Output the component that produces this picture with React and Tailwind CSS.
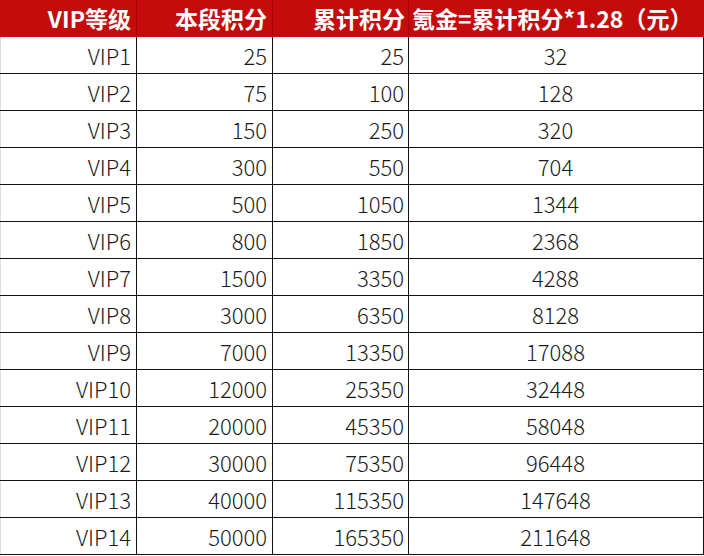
const rows = [
  ['VIP1', 25, 25, 32],
  ['VIP2', 75, 100, 128],
  ['VIP3', 150, 250, 320],
  ['VIP4', 300, 550, 704],
  ['VIP5', 500, 1050, 1344],
  ['VIP6', 800, 1850, 2368],
  ['VIP7', 1500, 3350, 4288],
  ['VIP8', 3000, 6350, 8128],
  ['VIP9', 7000, 13350, 17088],
  ['VIP10', 12000, 25350, 32448],
  ['VIP11', 20000, 45350, 58048],
  ['VIP12', 30000, 75350, 96448],
  ['VIP13', 40000, 115350, 147648],
  ['VIP14', 50000, 165350, 211648],
]

export default function App() {
  return (
    <div
      className="w-[704px] h-[556px] bg-white"
      style={{ fontFamily: '"Noto Sans CJK SC", "Noto Sans", sans-serif' }}
    >
      {/* Header */}
      <div className="grid grid-cols-[137px_136px_136px_295px] h-[37px] bg-[#c50c0c] text-white font-bold text-[23px] leading-none">
        <div className="flex items-center justify-end pr-[5px] border-r border-[#a80000]">VIP等级</div>
        <div className="flex items-center justify-end pr-[5px] border-r border-[#a80000]">本段积分</div>
        <div className="flex items-center justify-end pr-[3px] border-r border-[#a80000]">累计积分</div>
        <div className="flex items-center pl-[3px] whitespace-nowrap">氪金=累计积分*1.28（元）</div>
      </div>

      {/* Rows */}
      {rows.map(([lv, seg, total, money]) => (
        <div
          key={lv}
          className="grid grid-cols-[137px_136px_136px_295px] h-[37px] border-b border-[#111] text-[22px] font-light leading-none text-[#1a1a1a]"
        >
          <div className="flex items-center justify-end pr-[5px] border-r border-[#111] border-l border-l-[#ddd]">{lv}</div>
          <div className="flex items-center justify-end pr-[5px] border-r border-[#111]">{seg}</div>
          <div className="flex items-center justify-end pr-[4px] border-r border-[#111]">{total}</div>
          <div className="flex items-center justify-center border-r border-[#111] pr-[1px]">{money}</div>
        </div>
      ))}
    </div>
  )
}
